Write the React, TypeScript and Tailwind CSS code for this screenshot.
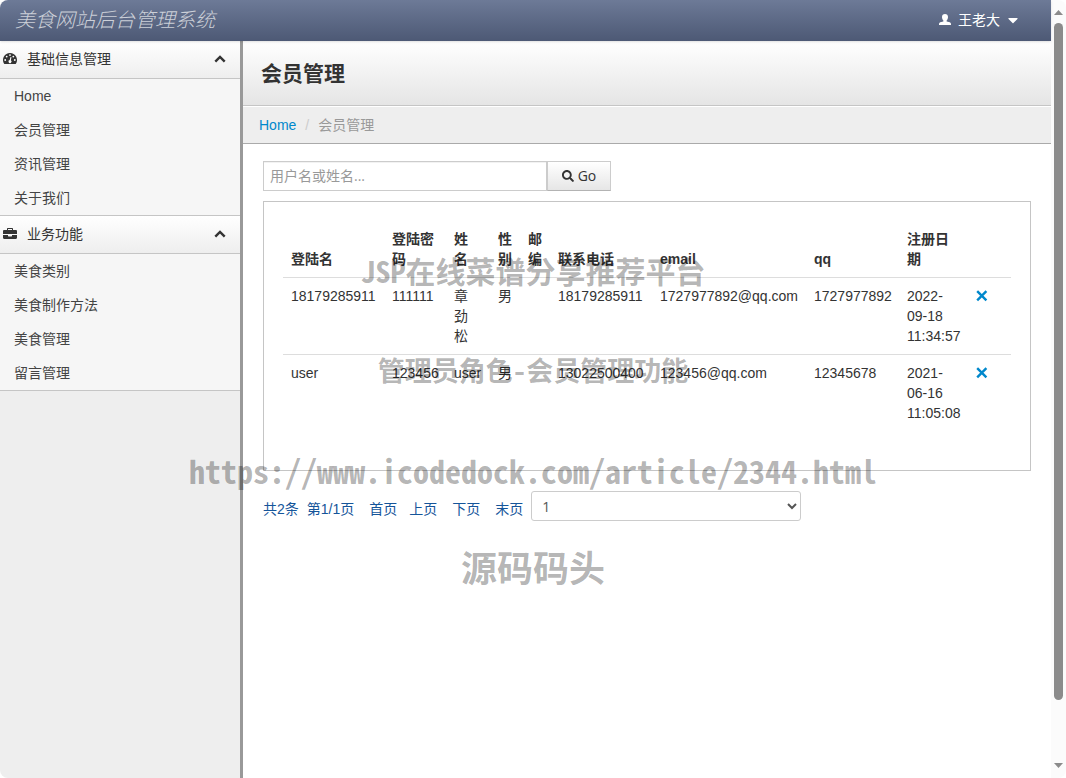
import type { ReactNode } from 'react';
import { FaCaretDown, FaSearch } from 'react-icons/fa';

function DashboardIcon() {
  return (
    <svg className="h-3.5 w-3.5" viewBox="0 0 14 14" aria-hidden="true">
      <path d="M7 1a7 7 0 0 0-5.900 10.700c.2.300.4.300.7.300h10.400c.3 0 .5 0 .7-.3A7 7 0 0 0 7 1z" fill="currentColor" />
      <g fill="#fff">
        <circle cx="2.200" cy="8" r=".9" />
        <circle cx="3.700" cy="4.600" r=".9" />
        <circle cx="7" cy="3.100" r=".9" />
        <circle cx="10.300" cy="4.600" r=".9" />
        <circle cx="11.800" cy="8" r=".9" />
        <path d="M7.500 5l1 .2-.7 3.100a1.500 1.500 0 1 1-1.100-.2z" />
      </g>
    </svg>
  );
}

function BriefcaseIcon() {
  return (
    <svg className="h-3.5 w-3.5" viewBox="0 0 14 14" aria-hidden="true">
      <path
        fill="currentColor"
        fillRule="evenodd"
        d="M4 3V2c0-.6.4-1 1-1h4c.6 0 1 .4 1 1v1h2.800C13.500 3 14 3.500 14 4.200V7H0V4.200C0 3.500.5 3 1.200 3zm1 0h4V2H5zM0 8h5v1c0 .3.2.5.5.5h3c.3 0 .5-.2.5-.5V8h5v2.800c0 .7-.5 1.200-1.200 1.200H1.200C.5 12 0 11.500 0 10.800z"
      />
    </svg>
  );
}

function ChevronUpIcon() {
  return (
    <svg className="h-3 w-3" viewBox="0 0 12 12" fill="none" stroke="currentColor" strokeWidth="2.400" aria-hidden="true">
      <path d="M1.300 8.700L6 4l4.700 4.700" />
    </svg>
  );
}

function RemoveIcon() {
  return (
    <svg className="h-3 w-3" viewBox="0 0 12 12" fill="none" stroke="currentColor" strokeWidth="2.400" aria-hidden="true">
      <path d="M1.200 1.200l9.200 9.200M10.400 1.200l-9.200 9.200" />
    </svg>
  );
}

function UserIcon() {
  return (
    <svg className="h-3 w-3" viewBox="0 0 12 12" fill="currentColor" aria-hidden="true">
      <path d="M6 0C4.100 0 3 1.300 3 3.100c0 1.500.6 2.900 1.500 3.700L4.300 7.400 1.200 8.300C.4 8.600 0 9.200 0 10V11h12v-1c0-.8-.4-1.400-1.200-1.700L7.700 7.400l-.2-.6C8.400 6 9 4.600 9 3.100 9 1.300 7.900 0 6 0z" />
    </svg>
  );
}

const menus = [
  {
    title: '基础信息管理',
    icon: <DashboardIcon />,
    items: ['Home', '会员管理', '资讯管理', '关于我们'],
  },
  {
    title: '业务功能',
    icon: <BriefcaseIcon />,
    items: ['美食类别', '美食制作方法', '美食管理', '留言管理'],
  },
];

const columns = [
  { label: '登陆名', width: 'w-[101px]', cell: 'px-2' },
  { label: '登陆密码', width: 'w-[62px]', cell: 'px-2' },
  { label: '姓名', width: 'w-[44px]', cell: 'pr-2.5 pl-2' },
  { label: '性别', width: 'w-[30px]', cell: 'pl-2' },
  { label: '邮编', width: 'w-[30px]', cell: 'pl-2' },
  { label: '联系电话', width: 'w-[102px]', cell: 'px-2' },
  { label: 'email', width: 'w-[154px]', cell: 'px-2' },
  { label: 'qq', width: 'w-[93px]', cell: 'px-2' },
  { label: '注册日期', width: 'w-[69px]', cell: 'px-2' },
  { label: '', width: 'w-auto', cell: 'px-2' },
];

const members = [
  ['18179285911', '111111', '章劲松', '男', '', '18179285911', '1727977892@qq.com', '1727977892', '2022-09-18 11:34:57'],
  ['user', '123456', 'user', '男', '', '13022500400', '123456@qq.com', '12345678', '2021-06-16 11:05:08'],
];

function Header() {
  return (
    <header className="z-10 flex h-[41px] items-center justify-between rounded-tl-lg bg-linear-to-b from-[#6d7a97] to-[#4d5975] pr-8 pb-0.5 pl-[15px] shadow-sm">
      <a href="#" className="font-light text-xl text-[#ccd0d8] italic">
        美食网站后台管理系统
      </a>
      <button type="button" className="flex items-center gap-[7px] text-sm text-white">
        <UserIcon />
        <span>王老大</span>
        <FaCaretDown className="h-4 w-3" />
      </button>
    </header>
  );
}

function MenuGroup({ title, icon, items }: Readonly<{ title: string; icon: ReactNode; items: string[] }>) {
  return (
    <section>
      <button
        type="button"
        className="flex h-[38px] w-full items-center gap-2.5 border-b border-[#c5c5c5] bg-linear-to-b from-white to-[#eee] pr-3.5 pb-0.5 pl-[3px] text-[#333]"
      >
        {icon}
        <span className="flex-1 text-left">{title}</span>
        <ChevronUpIcon />
      </button>
      <ul className="border-b border-[#c5c5c5] bg-[#f6f6f6]">
        {items.map((item) => (
          <li key={item}>
            <a href="#" className="block h-[34px] px-3.5 leading-[34px] text-[#444]">
              {item}
            </a>
          </li>
        ))}
      </ul>
    </section>
  );
}

function MemberTable() {
  return (
    <div className="border border-[#c5c5c5] px-[19px] pt-[19px] pb-[39px]">
      <table className="w-full table-fixed border-collapse leading-5">
        <colgroup>
          {columns.map((c) => (
            <col key={c.label} className={c.width} />
          ))}
        </colgroup>
        <thead>
          <tr className="text-left align-bottom">
            {columns.map((c) => (
              <th key={c.label} className={`py-2 ${c.cell}`}>
                {c.label}
              </th>
            ))}
          </tr>
        </thead>
        <tbody>
          {members.map((row) => (
            <tr key={row[0]} className="border-t border-[#ddd] align-top">
              {row.map((cell, i) => (
                <td key={columns[i].label} className={`py-2 ${columns[i].cell}`}>
                  {cell}
                </td>
              ))}
              <td className="p-2">
                <button type="button" aria-label="删除" className="flex h-5 items-center text-[#08c]">
                  <RemoveIcon />
                </button>
              </td>
            </tr>
          ))}
        </tbody>
      </table>
    </div>
  );
}

function Pagination() {
  return (
    <div className="mt-5 flex items-start text-[#15559a]">
      <div className="flex pt-2">
        <span className="mr-2">共2条</span>
        <span className="mr-[15px]">第1/1页</span>
        <a href="#" className="mr-3">首页</a>
        <a href="#" className="mr-[15px]">上页</a>
        <a href="#" className="mr-[15px]">下页</a>
        <a href="#" className="mr-2">末页</a>
      </div>
      <select
        aria-label="页码"
        className="h-[30px] w-[270px] rounded-[3px] border border-[#ccc] bg-white px-1.5 font-['Open_Sans','Noto_Sans_CJK_SC',sans-serif] text-[#555]"
      >
        <option>1</option>
      </select>
    </div>
  );
}

function ScrollTrack() {
  return (
    <div className="flex w-[15px] flex-col items-center rounded-r-lg bg-[#fbfbfb] py-2.5 text-[#8b8b8b]" aria-hidden="true">
      <svg className="h-[5px] w-[9px]" viewBox="0 0 9 5" fill="currentColor">
        <path d="M4.500 0L9 5H0z" />
      </svg>
      <div className="mt-2 w-[9px] flex-[678] rounded-full bg-[#8b8b8b]" />
      <div className="flex-[63]" />
      <svg className="h-[5px] w-[9px]" viewBox="0 0 9 5" fill="currentColor">
        <path d="M4.500 5L0 0h9z" />
      </svg>
    </div>
  );
}

function Watermark() {
  return (
    <div className="pointer-events-none absolute inset-x-0 top-[220px] z-20 flex flex-col items-center font-['Noto_Sans_CJK_SC',sans-serif] font-bold whitespace-nowrap text-black/30 [font-feature-settings:'hwid']">
      <p className="text-[30px] leading-[100px]">JSP在线菜谱分享推荐平台</p>
      <p className="text-[27px] leading-[100px]">管理员角色-会员管理功能</p>
      <p className="text-[32px] leading-[100px]">https://www.icodedock.com/article/2344.html</p>
      <p className="text-4xl leading-[92px]">源码码头</p>
    </div>
  );
}

export default function App() {
  return (
    <div className="relative flex min-h-screen bg-white font-['Liberation_Sans','Noto_Sans_CJK_SC',sans-serif] text-sm text-[#333]">
      <div className="flex min-w-0 flex-1 flex-col">
        <Header />
        <div className="flex flex-1">
          <nav className="w-[243px] shrink-0 rounded-bl-lg border-r-[3px] border-[#999] bg-[#eee]">
            {menus.map((menu) => (
              <MenuGroup key={menu.title} {...menu} />
            ))}
          </nav>
          <main className="min-w-0 flex-1">
            <div className="flex h-[65px] items-center border-b border-[#c5c5c5] bg-linear-to-b from-white to-[#e5e5e5] px-[18px] pt-0.5">
              <h1 className="font-bold text-[21px]">会员管理</h1>
            </div>
            <div className="flex h-[38px] items-center gap-[9px] border-t border-b border-t-white border-b-[#aaa] bg-[#eee] px-4">
              <a href="#" className="text-[#08c]">Home</a>
              <span className="text-[#ccc]">/</span>
              <span className="text-[#999]">会员管理</span>
            </div>
            <div className="px-5 pt-[17px]">
              <form className="mb-2.5 flex font-['Open_Sans','Noto_Sans_CJK_SC',sans-serif]">
                <input
                  type="text"
                  aria-label="用户名或姓名"
                  placeholder="用户名或姓名..."
                  className="h-[30px] w-[284px] border border-[#ccc] px-1.5 pb-0.5 inset-shadow-2xs placeholder:text-[#999]"
                />
                <button
                  type="button"
                  className="flex h-[30px] w-16 items-center justify-center gap-1 border border-[#ccc] border-b-[#b3b3b3] bg-linear-to-b from-white to-[#e6e6e6]"
                >
                  <FaSearch className="h-3 w-3" /> Go
                </button>
              </form>
              <MemberTable />
              <Pagination />
            </div>
          </main>
        </div>
      </div>
      <ScrollTrack />
      <Watermark />
    </div>
  );
}
